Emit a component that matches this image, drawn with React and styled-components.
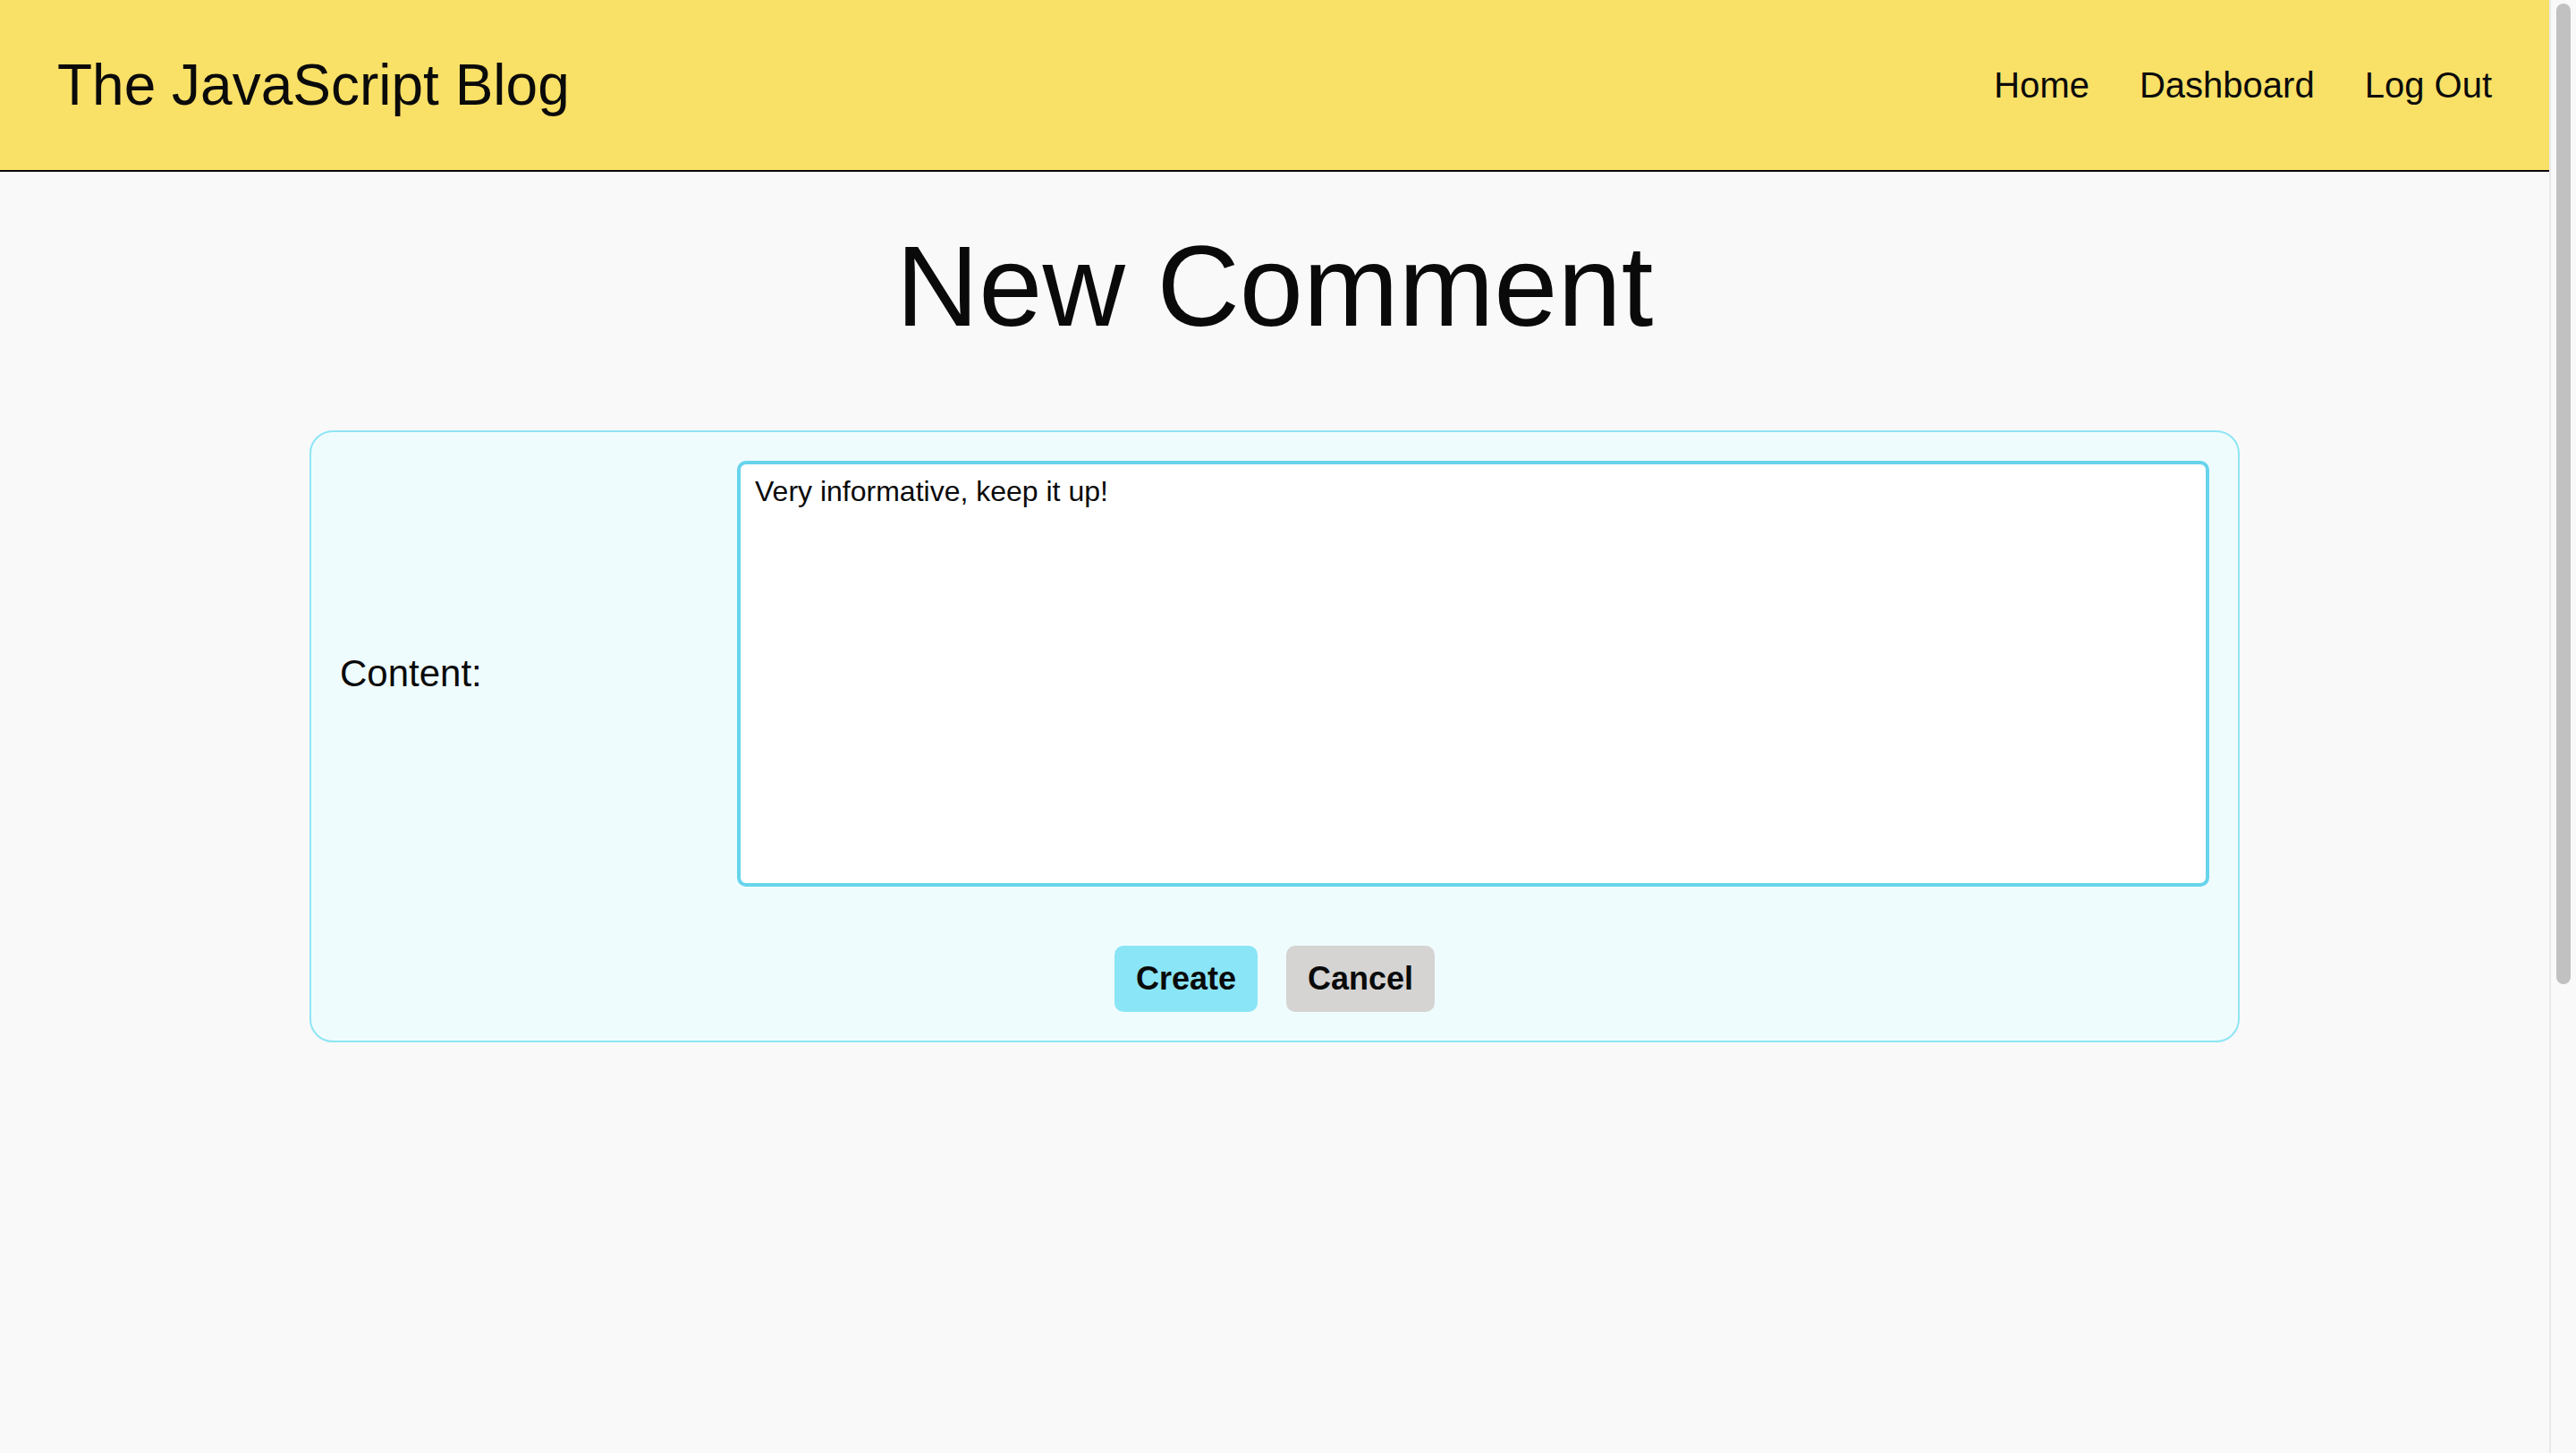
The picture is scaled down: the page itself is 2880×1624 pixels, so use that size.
import React, { useState } from "react";
import styled, { createGlobalStyle } from "styled-components";

const GlobalStyle = createGlobalStyle`
    html, body {
        margin: 0;
        padding: 0;
        background-color: #f9f9f9;
        font-family: "Liberation Sans", Arial, sans-serif;
        color: #111;
    }
    * {
        box-sizing: border-box;
    }
`;

const Page = styled.div`
    display: flex;
    align-items: flex-start;
`;

const Main = styled.div`
    flex: 1;
    min-width: 0;
    min-height: 2400px;
`;

// stand-in for the browser's window scrollbar seen in the screenshot
const ScrollRail = styled.div`
    position: sticky;
    top: 0;
    width: 30px;
    height: 100vh;
    flex-shrink: 0;
    background-color: #f9f9f9;
    border-left: 2px solid #e9e9e9;
    padding: 4px 6px 0 6px;
`;

const ScrollThumb = styled.div`
    width: 16px;
    height: 1096px;
    border-radius: 8px;
    background-color: #c1c1c1;
`;

const StyledHeader = styled.header`
    height: 192px;
    background-color: #f9e066;
    border-bottom: 2px solid #0a0a0a;
    padding: 0 64px;
    display: flex;
    justify-content: space-between;
    align-items: center;
`;

const Brand = styled.a`
    font-size: 64px;
    color: #0a0a0a;
    text-decoration: none;
`;

const Nav = styled.nav`
    display: flex;
    gap: 56px;
`;

const NavLink = styled.a`
    font-size: 40px;
    color: #0a0a0a;
    text-decoration: none;
    cursor: pointer;

    &:hover {
        text-decoration: underline;
    }
`;

const Title = styled.h1`
    margin: 54px 0 88px;
    font-size: 128px;
    font-weight: 400;
    text-align: center;
    color: #0a0a0a;
`;

const FormCard = styled.form`
    width: 2158px;
    max-width: calc(100% - 64px);
    margin: 0 auto;
    padding: 32px;
    background-color: #effcfd;
    border: 2px solid #8ee5f5;
    border-radius: 26px;
    display: flex;
    flex-direction: column;
    gap: 66px;
`;

const FieldRow = styled.div`
    display: grid;
    grid-template-columns: 444px 1fr;
    align-items: center;
`;

const Label = styled.label`
    font-size: 42px;
    color: #0a0a0a;
`;

const TextArea = styled.textarea`
    height: 476px;
    width: 100%;
    padding: 12px 16px;
    font-family: "Liberation Sans", Arial, sans-serif;
    font-size: 32px;
    color: #0a0a0a;
    background-color: #fff;
    border: 4px solid #67d4ec;
    border-radius: 10px;
    resize: none;
    outline: none;
`;

const Actions = styled.div`
    display: flex;
    justify-content: center;
    gap: 32px;
`;

const Button = styled.button`
    padding: 16px 24px;
    font-family: "Liberation Sans", Arial, sans-serif;
    font-size: 36px;
    font-weight: 700;
    color: #0a0a0a;
    background-color: ${({ variant }) => (variant === "primary" ? "#8ae5f6" : "#d5d4d3")};
    border: none;
    border-radius: 10px;
    cursor: pointer;
`;

export default function App() {
    const [content, setContent] = useState("Very informative, keep it up!");

    return (
        <Page>
            <GlobalStyle />
            <Main>
                <StyledHeader>
                    <Brand href="#">The JavaScript Blog</Brand>
                    <Nav>
                        <NavLink href="#">Home</NavLink>
                        <NavLink href="#">Dashboard</NavLink>
                        <NavLink href="#">Log Out</NavLink>
                    </Nav>
                </StyledHeader>

                <Title>New Comment</Title>

                <FormCard onSubmit={(e) => e.preventDefault()}>
                    <FieldRow>
                        <Label htmlFor="content">Content:</Label>
                        <TextArea
                            id="content"
                            value={content}
                            onChange={(e) => setContent(e.target.value)}
                        />
                    </FieldRow>
                    <Actions>
                        <Button type="submit" variant="primary">Create</Button>
                        <Button type="button">Cancel</Button>
                    </Actions>
                </FormCard>
            </Main>
            <ScrollRail>
                <ScrollThumb />
            </ScrollRail>
        </Page>
    );
}
